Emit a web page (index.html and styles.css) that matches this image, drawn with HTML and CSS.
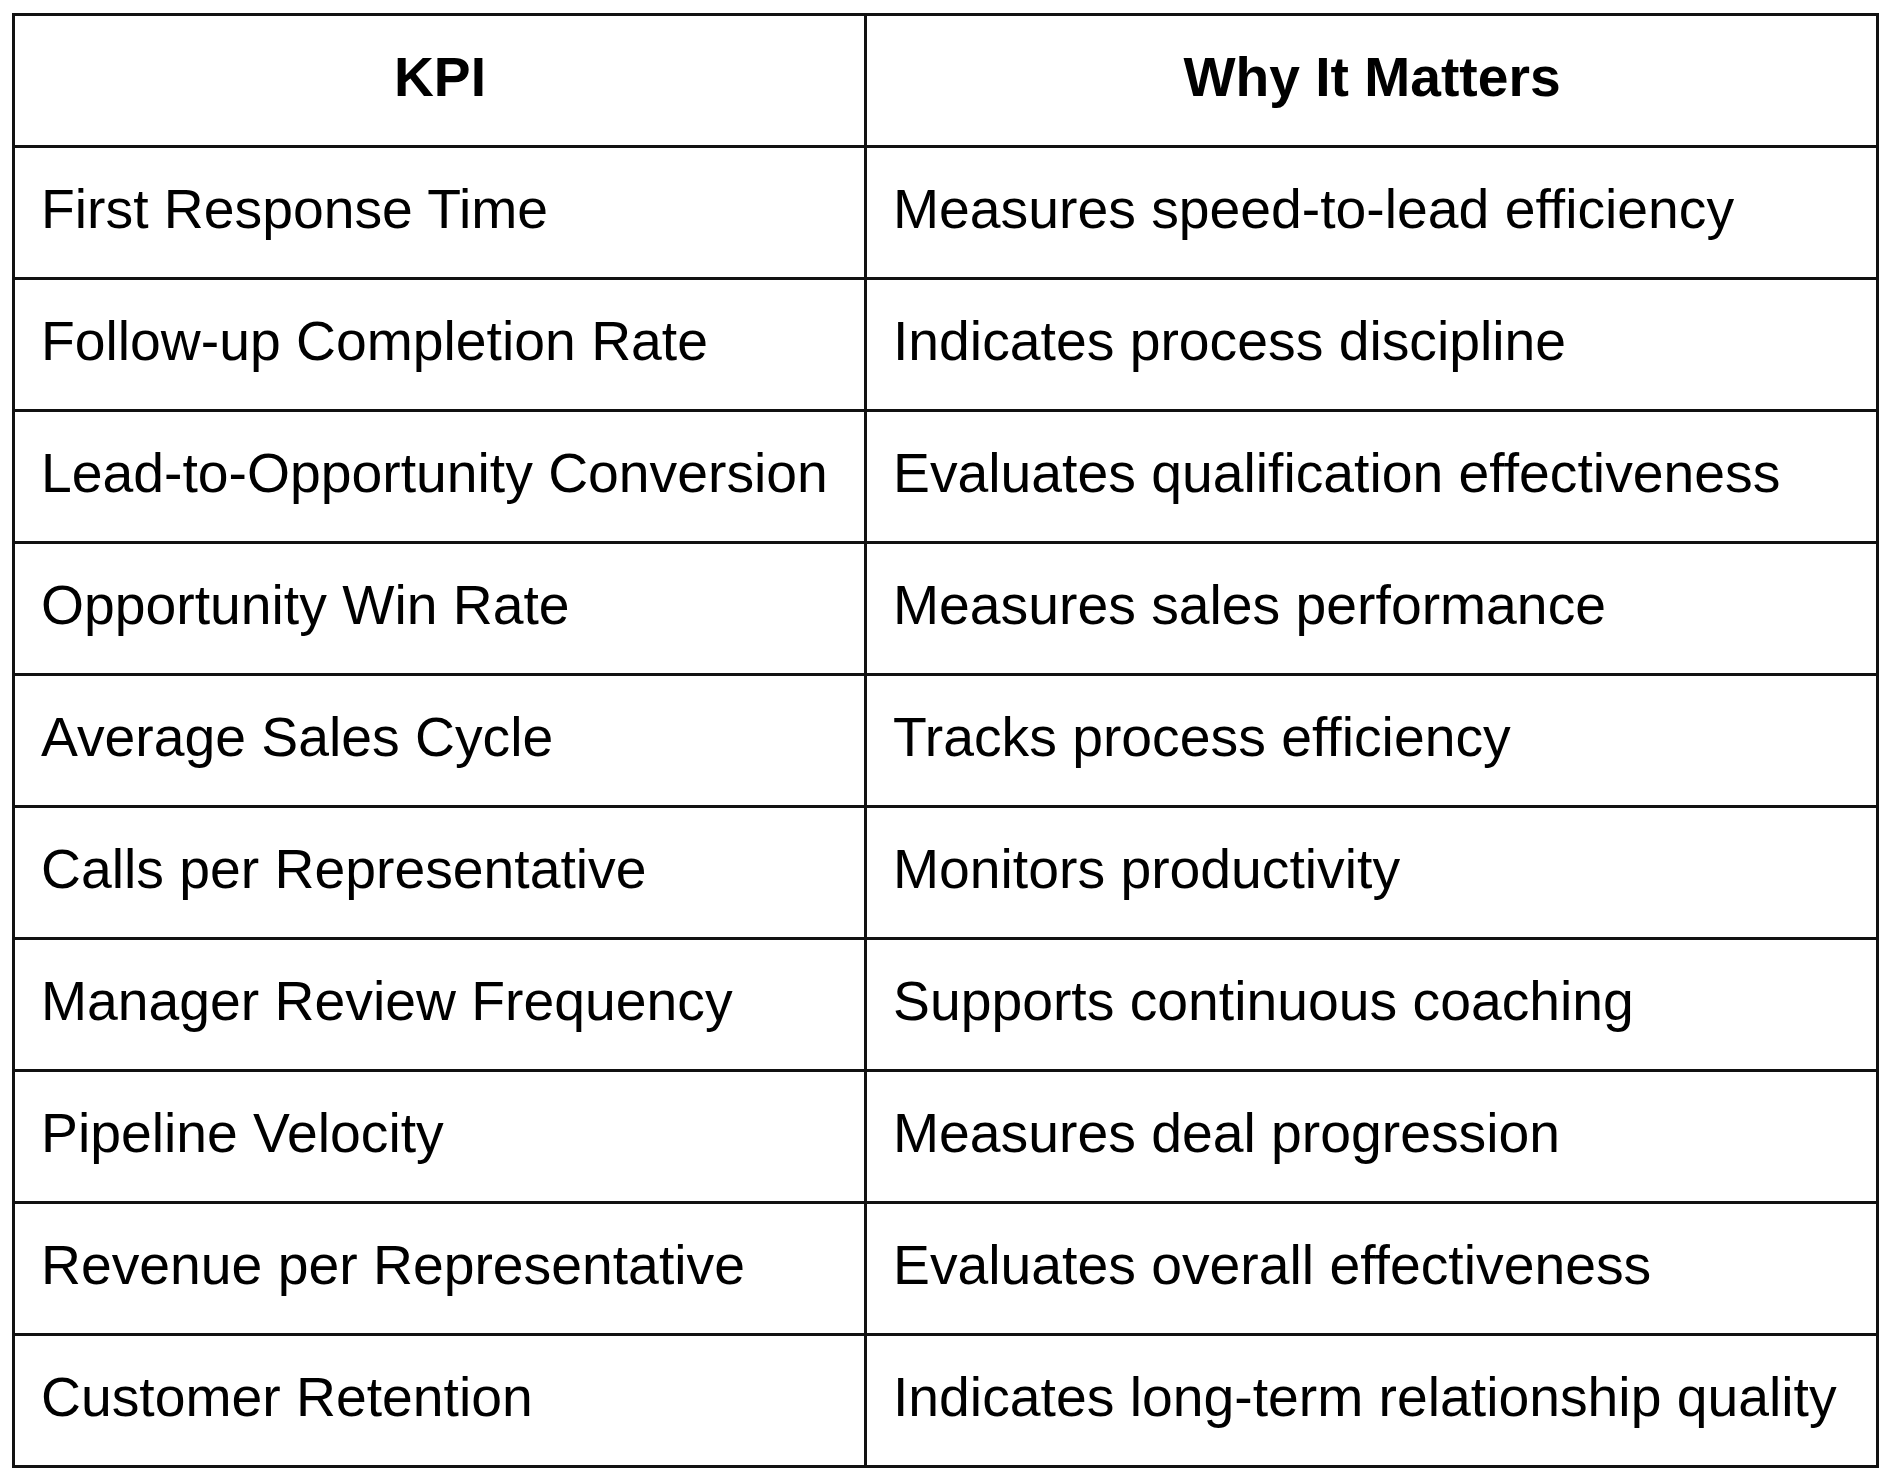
FILE: index.html
```html
<!DOCTYPE html>
<html lang="en">
<head>
<meta charset="utf-8">
<title>KPI Table</title>
<link rel="stylesheet" href="styles.css">
</head>
<body>
<div class="kpi-table">
  <div class="cell head">KPI</div>
  <div class="cell head">Why It Matters</div>
  <div class="cell">First Response Time</div>
  <div class="cell">Measures speed-to-lead efficiency</div>
  <div class="cell">Follow-up Completion Rate</div>
  <div class="cell">Indicates process discipline</div>
  <div class="cell">Lead-to-Opportunity Conversion</div>
  <div class="cell">Evaluates qualification effectiveness</div>
  <div class="cell">Opportunity Win Rate</div>
  <div class="cell">Measures sales performance</div>
  <div class="cell">Average Sales Cycle</div>
  <div class="cell">Tracks process efficiency</div>
  <div class="cell">Calls per Representative</div>
  <div class="cell">Monitors productivity</div>
  <div class="cell">Manager Review Frequency</div>
  <div class="cell">Supports continuous coaching</div>
  <div class="cell">Pipeline Velocity</div>
  <div class="cell">Measures deal progression</div>
  <div class="cell">Revenue per Representative</div>
  <div class="cell">Evaluates overall effectiveness</div>
  <div class="cell">Customer Retention</div>
  <div class="cell">Indicates long-term relationship quality</div>
</div>
</body>
</html>
```

FILE: styles.css
```css
html, body {
  margin: 0;
  padding: 0;
  background: #ffffff;
}

body {
  padding: 13px 0 0 12px;
  font-family: "Liberation Sans", Arial, sans-serif;
  color: #000000;
}

.kpi-table {
  display: grid;
  grid-template-columns: 849px 1009px;
  grid-auto-rows: 129px;
  gap: 3px;
  padding: 3px;
  width: 1867px;
  box-sizing: border-box;
  background: #111111;
}

.cell {
  background: #ffffff;
  display: flex;
  align-items: center;
  padding: 0 25px 7px 26px;
  font-size: 55.3px;
  white-space: nowrap;
}

.cell.head {
  justify-content: center;
  font-weight: bold;
  font-size: 55.2px;
}
```
